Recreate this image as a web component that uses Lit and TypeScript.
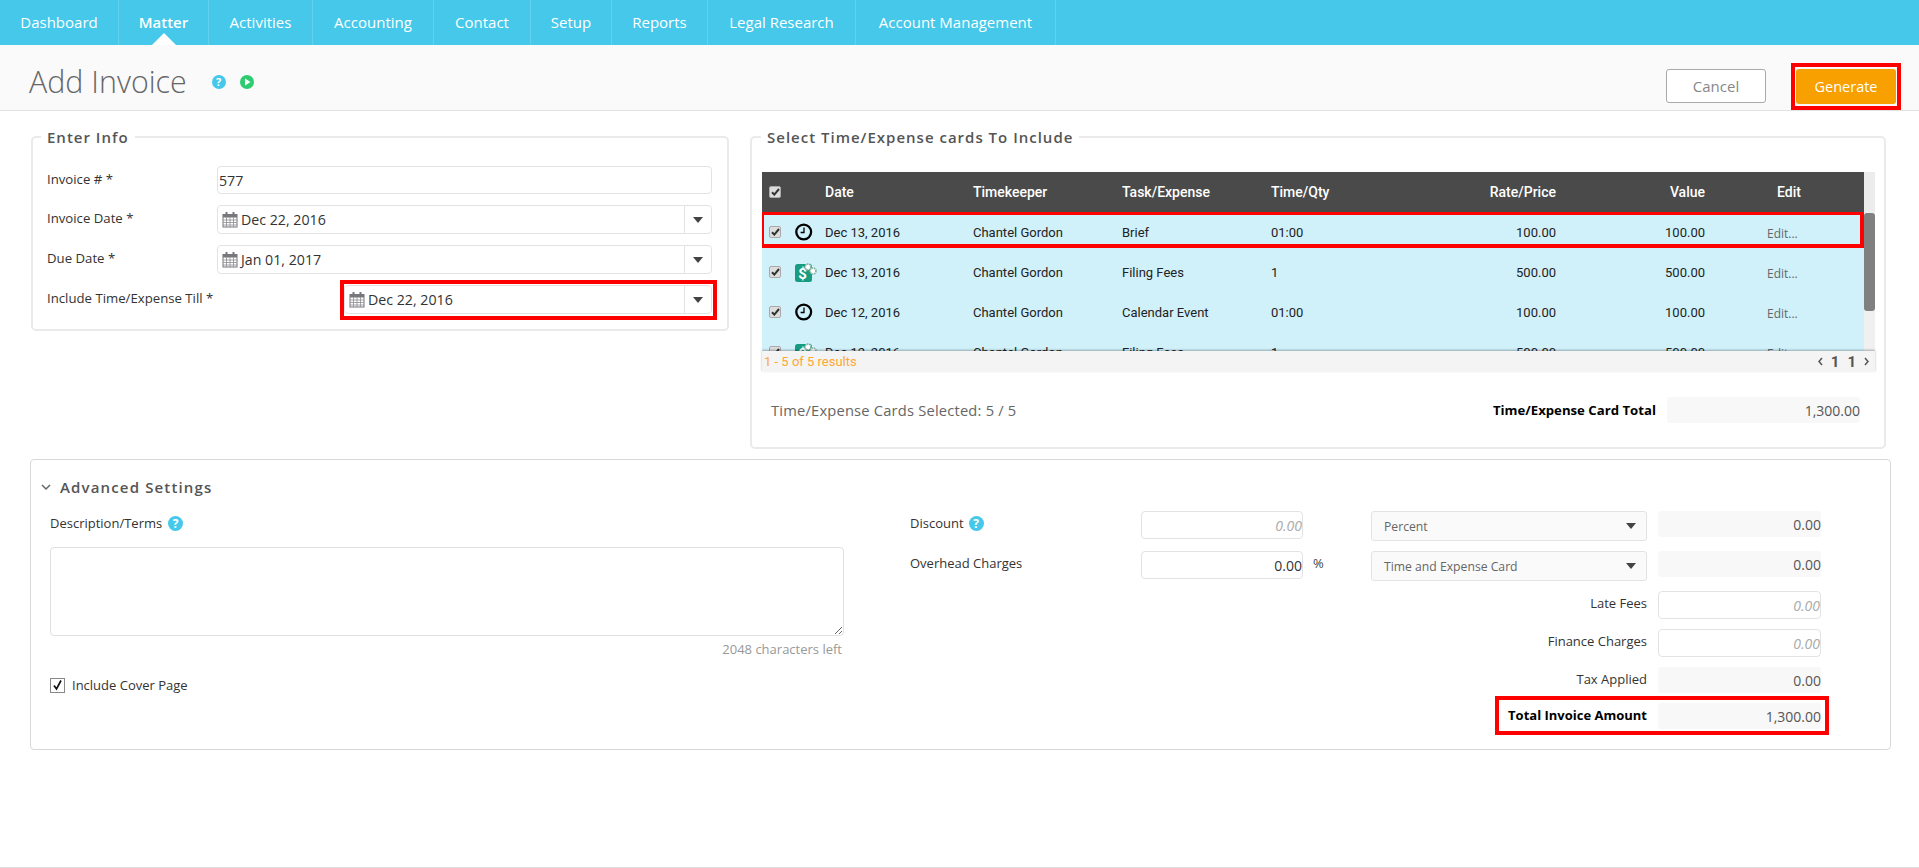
import { LitElement, html, css, svg } from "lit";
import { customElement } from "lit/decorators.js";

const navItems = ["Dashboard", "Matter", "Activities", "Accounting", "Contact", "Setup", "Reports", "Legal Research", "Account Management"];
const navWidths = [119, 90, 104, 121, 97, 81, 96, 148, 200];

const rows = [
  { kind: "time", date: "Dec 13, 2016", task: "Brief", qty: "01:00", rate: "100.00" },
  { kind: "fee", date: "Dec 13, 2016", task: "Filing Fees", qty: "1", rate: "500.00" },
  { kind: "time", date: "Dec 12, 2016", task: "Calendar Event", qty: "01:00", rate: "100.00" },
  { kind: "fee", date: "Dec 12, 2016", task: "Filing Fees", qty: "1", rate: "500.00" },
  { kind: "time", date: "Dec 12, 2016", task: "Brief", qty: "01:00", rate: "100.00" },
];

const calIcon = html`<svg class="cal" width="16" height="17" viewBox="0 0 16 17">
  <rect x="1" y="3.5" width="14" height="12.5" fill="#fff" stroke="#77777c" stroke-width="1"/>
  <path d="M1 3.5h14v3H1z" fill="#77777c"/>
  <path d="M1 9h14M1 11.5h14M1 14h14M4.5 6v10M8 6v10M11.5 6v10" stroke="#8d8d92" stroke-width=".8" fill="none"/>
  <path d="M4.5 1v4M11.5 1v4" stroke="#77777c" stroke-width="2" fill="none"/>
</svg>`;

const caret = html`<svg class="caret" width="10" height="6" viewBox="0 0 10 6"><path d="M0 0h10L5 6z" fill="#444"/></svg>`;

const clockIcon = html`<svg width="18" height="18" viewBox="0 0 18 18">
  <circle cx="8.7" cy="9" r="7.4" fill="none" stroke="#000" stroke-width="2.3"/>
  <path d="M9 4.6V9.5H5.6" fill="none" stroke="#000" stroke-width="1.3"/>
</svg>`;

const gear = (x: number, y: number) => svg`<circle cx="${x}" cy="${y}" r="3" fill="#fff" stroke="#7fae9f" stroke-width="1.6" stroke-dasharray="1.4 .7"/>`;

const feeIcon = html`<svg width="23" height="19" viewBox="0 0 23 19">
  <rect x="0" y="1" width="17" height="18" rx="2.5" fill="#179c80"/>
  <text x="7.6" y="15.5" text-anchor="middle" class="dollar">$</text>
  ${gear(13, 4)}${gear(18, 8)}
</svg>`;

const helpIcon = html`<span class="help">?</span>`;

@customElement("app-root")
export class AppRoot extends LitElement {
  static styles = css`
    :host {
      display: flex;
      flex-direction: column;
      height: 868px;
      overflow: hidden;
      box-sizing: border-box;
      border-bottom: 1px solid #ddd;
      background: #fff;
      font-family: "Open Sans", "Liberation Sans", sans-serif;
      font-size: 13px;
      color: #333;
    }
    * { box-sizing: border-box; }

    nav { display: flex; flex: none; height: 45px; background: #45c8ea; }
    .nav-item {
      position: relative;
      display: flex;
      align-items: center;
      justify-content: center;
      height: 45px;
      padding-bottom: 1px;
      border-right: 1px solid #62d1ee;
      color: #fff;
      font-size: 15px;
      white-space: nowrap;
    }
    .nav-item.active { font-weight: 600; }
    .nav-item.active::after {
      content: "";
      position: absolute;
      left: 50%;
      bottom: 0;
      margin-left: -12px;
      border-left: 12px solid transparent;
      border-right: 12px solid transparent;
      border-bottom: 12px solid #fff;
    }

    header {
      display: flex;
      flex: none;
      align-items: flex-start;
      height: 66px;
      background: #fafafa;
      border-bottom: 1px solid #e2e2e2;
      padding: 24px 23px 0 29px;
    }
    h1 {
      margin: -8px 0 0;
      font-size: 30.4px;
      font-weight: 300;
      line-height: 42px;
      color: #666;
      white-space: nowrap;
    }
    .title-icons { display: flex; gap: 14px; margin: 6px auto 0 25px; }
    .title-icons .help { width: 14px; height: 14px; line-height: 14px; font-size: 11px; }
    .play { display: block; }
    .btn {
      display: flex;
      align-items: center;
      justify-content: center;
      height: 34px;
      border-radius: 3px;
      font-size: 15px;
    }
    .cancel { width: 100px; background: #fff; border: 1px solid #aaa; color: #888; margin-right: 30px; }
    .generate { position: relative; width: 100px; height: 35px; background: #f7a000; color: #fff; font-size: 14.5px; }
    .generate::after { content: ""; position: absolute; inset: -6px -5px -6px -5px; border: 4px solid #f00; }

    .top { display: flex; flex: none; align-items: flex-start; gap: 21px; padding: 16px 33px 0 31px; }

    fieldset {
      margin: 0;
      min-width: 0;
      border: 2px solid #eaeaea;
      border-radius: 5px;
    }
    legend {
      margin-left: -6px;
      padding: 0 6px;
      font-size: 15px;
      font-weight: 600;
      letter-spacing: 1px;
      color: #555;
      line-height: 20px;
    }
    .cards legend { margin-left: -1px; }
    .info { width: 698px; height: 204px; padding: 8px 15px 0 14px; }
    .cards { flex: 1; height: 322px; padding: 25px 9px 0 10px; }

    .form-row { display: grid; grid-template-columns: 170px 1fr; align-items: center; margin-top: 11px; }
    .form-row:first-child { margin-top: 0; margin-bottom: -1px; }
    .form-row > label { padding-bottom: 3px; font-size: 13.2px; color: #333; white-space: nowrap; }

    .input {
      display: flex;
      align-items: center;
      height: 28px;
      background: #fff;
      border: 1px solid #e3e3e3;
      border-radius: 4px;
      font-size: 14.2px;
      color: #333;
      padding: 0 1px;
    }
    .date { height: 29px; padding: 0; }
    .date .cal { margin: 0 3px 0 4px; flex: none; }
    .date .value { flex: 1; }
    .date .drop {
      display: flex;
      align-items: center;
      justify-content: center;
      width: 27px;
      height: 100%;
      border-left: 1px solid #e3e3e3;
    }
    .marked { position: relative; }
    .marked.till { margin-left: 127px; }
    .marked.till::after { content: ""; position: absolute; inset: -6px -6px -7px -5px; border: 4px solid #f00; }

    .grid { display: grid; grid-template-columns: 1fr 11px; }
    .thead, .trow {
      display: grid;
      grid-template-columns: 33px 30px 148px 149px 149px 129px 156px 149px 1fr;
      align-items: center;
    }
    .thead { height: 40px; background: #4a4a4a; color: #fff; font: 500 14px Roboto, sans-serif; }
    .track-top { background: #ececec; }
    .viewport { height: 139px; overflow: hidden; }
    .trow { position: relative; height: 40px; background: #d0f1fa; font: 400 13px Roboto, sans-serif; color: #222; }
    .trow.marked::after { content: ""; position: absolute; inset: -1px 0 4px -2px; border: 4px solid #f00; }
    .thead > div, .trow > div { white-space: nowrap; }
    .c-check { padding-left: 7px; display: flex; }
    .c-icon { display: flex; align-items: center; }
    .num { text-align: right; }
    .thead .edit { padding-left: 72px; }
    .trow .edit { padding-left: 62px; font: 400 12px "Open Sans", sans-serif; color: #666; padding-top: 2px; }
    .check {
      display: flex;
      align-items: center;
      justify-content: center;
      width: 12px;
      height: 12px;
      background: #ddd;
      border: 1px solid #aaa;
      border-radius: 2px;
    }
    .dollar { font: 700 15px Roboto, sans-serif; fill: #fff; }
    .track { background: #f0f0f0; height: 139px; }
    .thumb { height: 98px; margin-top: 1px; background: #808080; border-radius: 3px; }
    .tfoot {
      grid-column: 1 / -1;
      display: flex;
      align-items: center;
      justify-content: space-between;
      height: 21px;
      background: #f4f4f4;
      box-shadow: 0 -1px 2px rgba(0, 0, 0, .3);
      position: relative;
      padding: 0 6px 0 2px;
      font: 400 13px Roboto, sans-serif;
      color: #ffa733;
    }
    .pager { display: flex; gap: 8px; color: #555; font: 700 15px Roboto, sans-serif; }
    .pager svg { align-self: center; }

    .totals { display: flex; align-items: center; margin-top: 25px; padding-left: 9px; padding-right: 15px; }
    .selected { flex: 1; font-size: 14.7px; color: #666; letter-spacing: .2px; }
    .totals b { font-size: 13.2px; font-weight: 700; color: #000; margin-right: 11px; }
    .readonly {
      display: flex;
      align-items: center;
      justify-content: flex-end;
      height: 26px;
      background: #f8f8f8;
      border-radius: 3px;
      font-size: 14px;
      color: #555;
    }
    .totals .readonly { width: 193px; }

    .advanced {
      flex: none;
      margin: 10px 28px 0 30px;
      height: 291px;
      border: 1px solid #d8d8d8;
      border-radius: 4px;
      padding: 8px 0 0 19px;
      display: grid;
      grid-template-columns: 860px 1fr;
      grid-template-rows: 38px 1fr;
    }
    .adv-title {
      grid-column: 1 / -1;
      display: flex;
      align-items: center;
      gap: 9px;
      margin-left: -9px;
      font-size: 15px;
      font-weight: 600;
      letter-spacing: 1.15px;
      color: #555;
    }
    .desc { padding-top: 7px; }
    .desc-label { display: flex; align-items: center; gap: 6px; height: 20px; font-size: 13px; }
    .help {
      display: inline-block;
      width: 15px;
      height: 15px;
      border-radius: 50%;
      background: #45c8ea;
      color: #fff;
      font: 700 12px/15px "Open Sans", sans-serif;
      text-align: center;
    }
    textarea {
      display: block;
      width: 794px;
      height: 89px;
      margin-top: 14px;
      border: 1px solid #e0e0e0;
      border-radius: 4px;
      outline: none;
      background: #fff;
    }
    .left-note { width: 792px; margin-top: 4px; text-align: right; font-size: 13px; color: #999; }
    .cover { display: flex; align-items: center; gap: 7px; margin-top: 18px; font-size: 13px; }
    .cover-box {
      display: flex;
      align-items: center;
      justify-content: center;
      width: 15px;
      height: 15px;
      background: #fff;
      border: 1px solid #888;
    }

    .charges { display: flex; flex-direction: column; padding-top: 5px; }
    .c-row {
      display: grid;
      grid-template-columns: 231px 162px 68px 276px 11px 163px;
      align-items: start;
      height: 40px;
    }
    .c-row.small { height: 38px; }
    .c-row.tax { height: 36px; }
    .c-row .lbl { display: flex; align-items: center; gap: 5px; height: 26px; padding-bottom: 2px; font-size: 13px; white-space: nowrap; }
    .c-row .right { grid-column: 1 / 5; height: 26px; padding-bottom: 2px; display: flex; align-items: center; justify-content: flex-end; font-size: 13px; white-space: nowrap; }
    .c-row .total-lbl { font-weight: 700; color: #000; }
    .c-row .val { grid-column: 6; }
    .num-input { justify-content: flex-end; padding: 0; font-size: 14px; }
    .placeholder { font-style: italic; color: #aaa; }
    .pct { padding: 3px 0 0 10px; font-size: 13px; color: #444; }
    .select {
      display: flex;
      align-items: center;
      justify-content: space-between;
      height: 30px;
      padding: 0 10px 0 12px;
      background: #fafafa;
      border: 1px solid #e3e3e3;
      border-radius: 3px;
      font-size: 12.2px;
      color: #666;
    }
    .c-row.total { position: relative; }
    .total-mark { position: absolute; left: 585px; width: 334px; top: -7px; height: 39px; border: 4px solid #f00; pointer-events: none; }
  `;

  private chk() {
    return html`<span class="check"><svg width="9" height="8" viewBox="0 0 9 8"><path d="M1 4.2 3.3 6.6 8 1" fill="none" stroke="#333" stroke-width="2"/></svg></span>`;
  }

  private dateField(value: string, cls = "") {
    return html`<div class="input date ${cls}">
      ${calIcon}<span class="value">${value}</span><span class="drop">${caret}</span>
    </div>`;
  }

  render() {
    return html`
      <nav>
        ${navItems.map((n, i) => html`<div class="nav-item ${n === "Matter" ? "active" : ""}" style="width:${navWidths[i]}px">${n}</div>`)}
      </nav>
      <header>
        <h1>Add Invoice</h1>
        <div class="title-icons">
          <span class="help">?</span>
          <svg class="play" width="14" height="14" viewBox="0 0 14 14"><circle cx="7" cy="7" r="7" fill="#2ecc71"/><path d="M5 3.5v7L10.5 7z" fill="#fff"/></svg>
        </div>
        <div class="btn cancel">Cancel</div>
        <div class="btn generate">Generate</div>
      </header>

      <div class="top">
        <fieldset class="info">
          <legend>Enter Info</legend>
          <div class="form-row"><label>Invoice # *</label><div class="input">577</div></div>
          <div class="form-row"><label>Invoice Date *</label>${this.dateField("Dec 22, 2016")}</div>
          <div class="form-row"><label>Due Date *</label>${this.dateField("Jan 01, 2017")}</div>
          <div class="form-row"><label>Include Time/Expense Till *</label>${this.dateField("Dec 22, 2016", "marked till")}</div>
        </fieldset>

        <fieldset class="cards">
          <legend>Select Time/Expense cards To Include</legend>
          <div class="grid">
            <div class="thead">
              <div class="c-check">${this.chk()}</div><div></div>
              <div>Date</div><div>Timekeeper</div><div>Task/Expense</div><div>Time/Qty</div>
              <div class="num">Rate/Price</div><div class="num">Value</div><div class="edit">Edit</div>
            </div>
            <div class="track-top"></div>
            <div class="viewport">
              ${rows.map((r, i) => html`<div class="trow ${i === 0 ? "marked" : ""}">
                <div class="c-check">${this.chk()}</div>
                <div class="c-icon">${r.kind === "time" ? clockIcon : feeIcon}</div>
                <div>${r.date}</div><div>Chantel Gordon</div><div>${r.task}</div><div>${r.qty}</div>
                <div class="num">${r.rate}</div><div class="num">${r.rate}</div><div class="edit">Edit...</div>
              </div>`)}
            </div>
            <div class="track"><div class="thumb"></div></div>
            <div class="tfoot">
              <span>1 - 5 of 5 results</span>
              <span class="pager">
                <svg width="5" height="9" viewBox="0 0 5 9"><path d="M4 1 1 4.5 4 8" fill="none" stroke="#555" stroke-width="1.5"/></svg>
                <span>1</span><span>1</span>
                <svg width="5" height="9" viewBox="0 0 5 9"><path d="M1 1l3 3.5L1 8" fill="none" stroke="#555" stroke-width="1.5"/></svg>
              </span>
            </div>
          </div>
          <div class="totals">
            <span class="selected">Time/Expense Cards Selected: 5 / 5</span>
            <b>Time/Expense Card Total</b>
            <div class="readonly">1,300.00</div>
          </div>
        </fieldset>
      </div>

      <section class="advanced">
        <div class="adv-title">
          <svg width="10" height="7" viewBox="0 0 10 7"><path d="M1 1l4 4 4-4" fill="none" stroke="#666" stroke-width="1.5"/></svg>
          Advanced Settings
        </div>
        <div class="desc">
          <div class="desc-label">Description/Terms ${helpIcon}</div>
          <textarea></textarea>
          <div class="left-note">2048 characters left</div>
          <div class="cover">
            <span class="cover-box"><svg width="11" height="12" viewBox="0 0 11 12"><path d="M2 6.5 4.5 10 9 1.5" fill="none" stroke="#111" stroke-width="1.7"/></svg></span>
            Include Cover Page
          </div>
        </div>
        <div class="charges">
          <div class="c-row">
            <div class="lbl">Discount ${helpIcon}</div>
            <div class="input num-input placeholder">0.00</div><div></div>
            <div class="select">Percent ${caret}</div><div></div>
            <div class="readonly">0.00</div>
          </div>
          <div class="c-row">
            <div class="lbl">Overhead Charges</div>
            <div class="input num-input">0.00</div><div class="pct">%</div>
            <div class="select">Time and Expense Card ${caret}</div><div></div>
            <div class="readonly">0.00</div>
          </div>
          <div class="c-row small">
            <div class="right">Late Fees</div>
            <div class="val input num-input placeholder">0.00</div>
          </div>
          <div class="c-row small">
            <div class="right">Finance Charges</div>
            <div class="val input num-input placeholder">0.00</div>
          </div>
          <div class="c-row tax">
            <div class="right">Tax Applied</div>
            <div class="val readonly">0.00</div>
          </div>
          <div class="c-row total">
            <div class="right total-lbl">Total Invoice Amount</div>
            <div class="val readonly">1,300.00</div>
            <div class="total-mark"></div>
          </div>
        </div>
      </section>
    `;
  }
}
